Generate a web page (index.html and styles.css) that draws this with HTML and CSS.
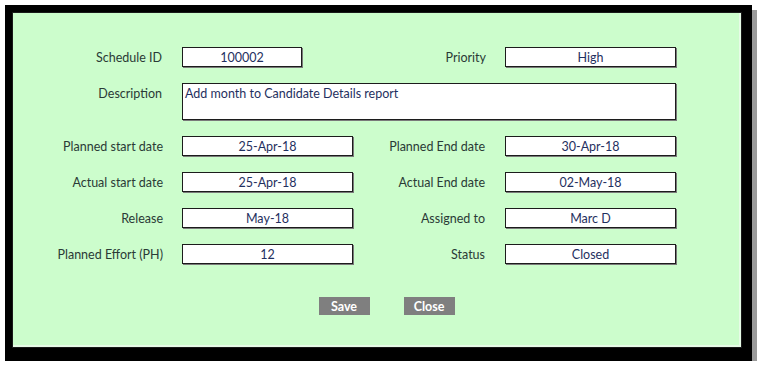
FILE: index.html
```html
<!DOCTYPE html>
<html lang="en">
<head>
  <meta charset="UTF-8">
  <title>Schedule Details</title>
  <link rel="stylesheet" href="styles.css">
</head>
<body>
  <div class="frame">
    <div class="panel">
      <div class="form">
        <label class="lbl">Schedule ID</label>
        <div class="box short">100002</div>
        <label class="lbl">Priority</label>
        <div class="box">High</div>

        <label class="lbl top">Description</label>
        <div class="box desc">Add month to Candidate Details report</div>

        <label class="lbl">Planned start date</label>
        <div class="box">25-Apr-18</div>
        <label class="lbl">Planned End date</label>
        <div class="box">30-Apr-18</div>

        <label class="lbl">Actual start date</label>
        <div class="box">25-Apr-18</div>
        <label class="lbl">Actual End date</label>
        <div class="box">02-May-18</div>

        <label class="lbl">Release</label>
        <div class="box">May-18</div>
        <label class="lbl">Assigned to</label>
        <div class="box">Marc D</div>

        <label class="lbl">Planned Effort (PH)</label>
        <div class="box">12</div>
        <label class="lbl">Status</label>
        <div class="box">Closed</div>
      </div>

      <div class="actions">
        <button class="btn">Save</button>
        <button class="btn">Close</button>
      </div>
    </div>
  </div>
</body>
</html>
```

FILE: styles.css
```css
/* page */
html, body { margin: 0; padding: 0; background: #fff; }
body { font-family: 'Lato', 'Open Sans', sans-serif; }

/* black window frame with drop shadow */
.frame {
  margin: 5px 0 0 5px;
  width: 730px; height: 336px;
  border-style: solid; border-color: #000;
  border-width: 7px 10px 13px 7px;
  box-shadow: 5px 5px 0 #9a9a9a;
  background: #ccfdcc;
}
.panel {
  height: 100%;
  box-sizing: border-box;
  padding-top: 35px;
  box-shadow: inset 0 0 0 1px #1a1a1a, inset -3px -3px 0 #e6fbe6;
}

/* form grid */
.form {
  display: grid;
  grid-template-columns: 170px 171px 152px 171px;
  grid-template-rows: 20px 37px 20px 20px 20px 20px;
  row-gap: 16px;
}
.lbl {
  font-size: 12.5px; color: #2a3a36;
  text-align: right; padding-right: 20px;
  align-self: center;
}
.lbl:nth-child(4n+3) { padding-right: 19px; }
.lbl.top { align-self: start; padding-top: 3px; padding-right: 20px; }

.box {
  box-sizing: border-box;
  background: #fff;
  border: 1px solid #1c1c1c;
  box-shadow: 1px 1px 0 #7a7a7a;
  font-size: 12.5px; color: #1f3060;
  text-align: center; line-height: 19px;
}
.box.short { width: 120px; }
.box.desc {
  grid-column: 2 / 5;
  text-align: left; padding: 0 0 0 2px;
}

/* buttons */
.actions {
  display: flex; justify-content: center; gap: 34px;
  padding-left: 19px; margin-top: 33px;
}
.btn {
  width: 51px; height: 18px; padding: 0;
  background: #7f7f7f; color: #fff; border: none;
  font-family: inherit; font-size: 12.5px; font-weight: bold;
  cursor: pointer;
}
```
